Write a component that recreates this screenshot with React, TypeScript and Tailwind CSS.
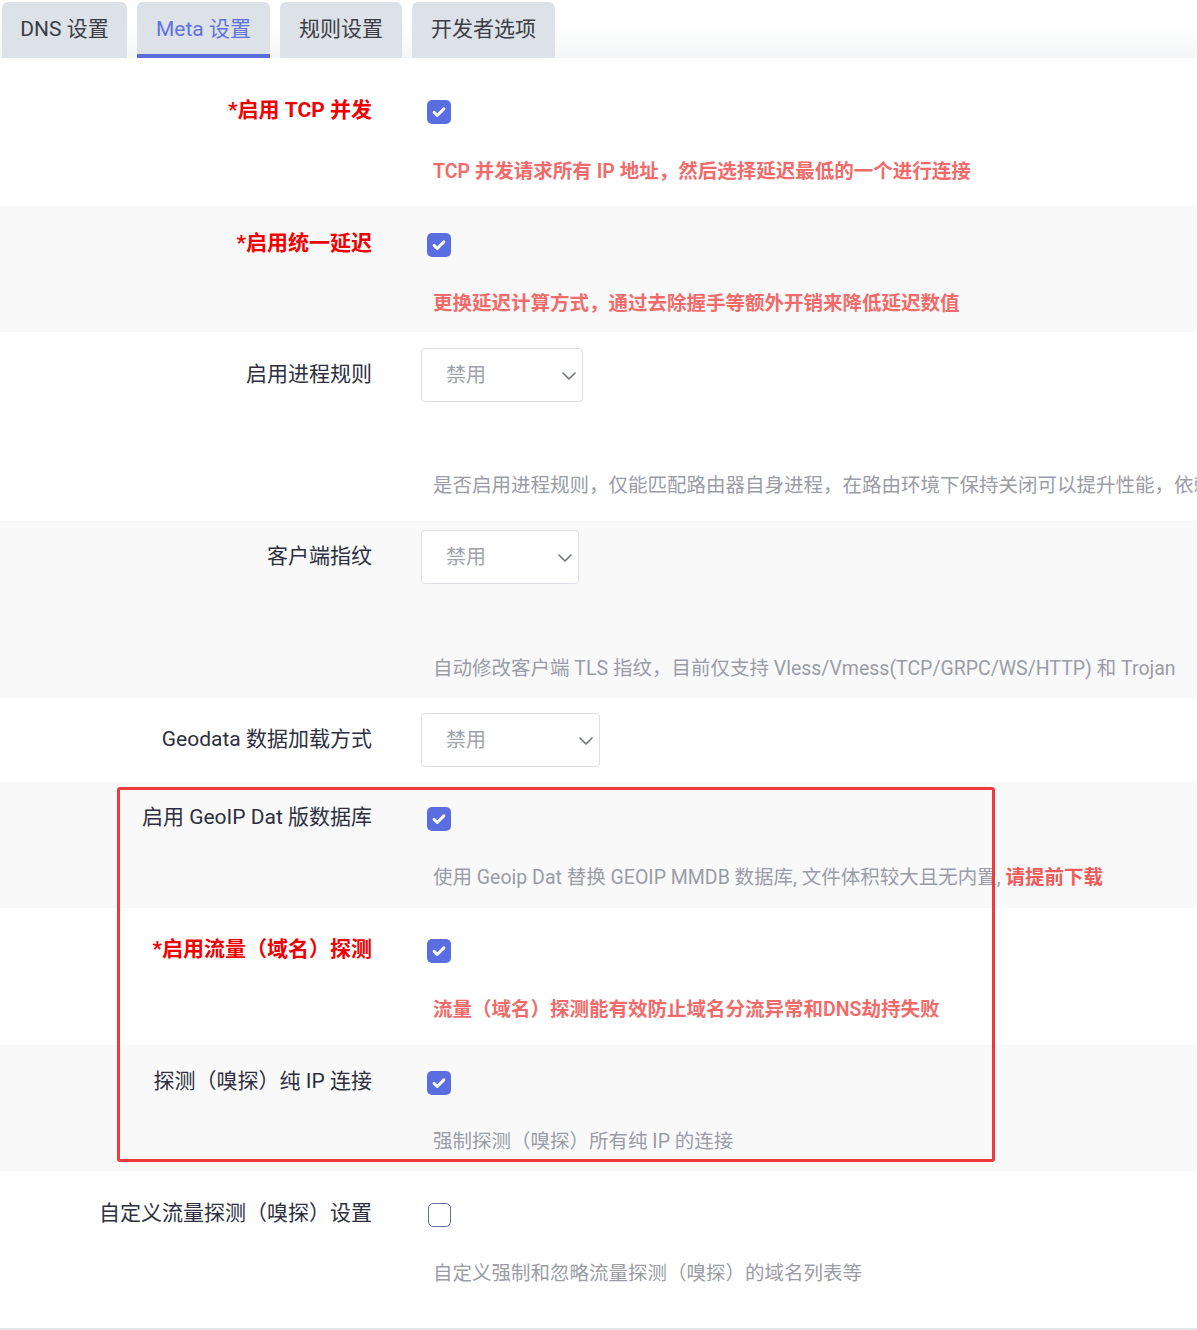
import React from "react";

const FONT = { fontFamily: '"Roboto", "Noto Sans CJK SC", sans-serif' };

const tabs = [
  { name: "DNS 设置", w: "w-[125px]" },
  { name: "Meta 设置", w: "w-[133px]" },
  { name: "规则设置", w: "w-[122px]" },
  { name: "开发者选项", w: "w-[143px]" },
];

const CheckBox = ({ checked = true }: { checked?: boolean }) =>
  checked ? (
    <span className="ml-[6px] flex h-6 w-6 items-center justify-center rounded-[5px] bg-[#5b6ee1]">
      <svg width="18" height="18" viewBox="0 0 24 24" fill="none">
        <path
          d="M5.5 12.5l4.2 4.2L18.5 7.8"
          stroke="white"
          strokeWidth="4"
          strokeLinecap="round"
          strokeLinejoin="round"
        />
      </svg>
    </span>
  ) : (
    <span className="ml-[7px] block h-6 w-[23px] rounded-[5px] border-[1.5px] border-[#66709e] bg-white" />
  );

const Select = ({ width }: { width: string }) => (
  <div
    className={`flex h-[54px] items-center justify-between rounded-[4px] border border-[#dcdfe6] bg-white pl-[24px] pr-[6px] ${width}`}
  >
    <span className="text-[20px] text-[#a0a3ab]">禁用</span>
    <svg width="14" height="8" viewBox="0 0 14 8" fill="none" className="mt-[2px]">
      <path d="M1 1l6 6 6-6" stroke="#70747c" strokeWidth="1.6" strokeLinecap="round" strokeLinejoin="round" />
    </svg>
  </div>
);

type RowProps = {
  label: string;
  required?: boolean;
  gray?: boolean;
  desc?: React.ReactNode;
  red?: boolean;
  pad: string;
  gap?: string;
  checked?: boolean;
};

const Desc = ({ children, red, gap }: { children: React.ReactNode; red?: boolean; gap?: string }) => (
  <div
    className={`whitespace-nowrap pl-[12px] text-[19.5px] leading-[28px] ${gap} ${
      red ? "font-semibold text-[#f26b6b]" : "text-[#9a9ca6]"
    }`}
  >
    {children}
  </div>
);

const CheckRow = ({ label, required, gray, desc, red, pad, gap, checked = true }: RowProps) => (
  <div className={`flex ${gray ? "bg-[#f9f9f9]" : "bg-white"} ${pad}`}>
    <div className="flex w-[372px] shrink-0 justify-end">
      <div
        className={`-mt-[2px] h-6 whitespace-nowrap text-[21px] leading-[24px] ${
          required ? "font-bold text-[#f00000]" : "text-[#2d2f40]"
        }`}
      >
        {required ? "*" : ""}
        {label}
      </div>
    </div>
    <div className="min-w-0 flex-1 pl-[49px]">
      <div className="flex h-6 items-center">
        <CheckBox checked={checked} />
      </div>
      {desc && (
        <Desc red={red} gap={gap}>
          {desc}
        </Desc>
      )}
    </div>
  </div>
);

const SelectRow = ({ label, gray, desc, pad, gap, width }: RowProps & { width: string }) => (
  <div className={`flex ${gray ? "bg-[#f9f9f9]" : "bg-white"} ${pad}`}>
    <div className="flex h-[54px] w-[372px] shrink-0 items-center justify-end">
      <span className="whitespace-nowrap text-[21px] text-[#2d2f40]">{label}</span>
    </div>
    <div className="min-w-0 flex-1 pl-[49px]">
      <Select width={width} />
      {desc && <Desc gap={gap}>{desc}</Desc>}
    </div>
  </div>
);

export default function App() {
  return (
    <div style={FONT} className="relative w-[1197px] overflow-hidden bg-white">
      <div className="flex h-[58px] gap-[10px] bg-linear-to-b from-white from-40% to-[#f5f6f7] pl-[2px] pt-[2px]">
        {tabs.map((t, i) => (
          <div
            key={t.name}
            className={`flex h-[56px] items-center justify-center rounded-t-[6px] bg-[#dde1e8] text-[21px] ${t.w} ${
              i === 1
                ? "text-[#6173dc] shadow-[inset_0_-4px_0_#5a6edb]"
                : "text-[#3b3e45]"
            }`}
          >
            {t.name}
          </div>
        ))}
      </div>

      <CheckRow
        label="启用 TCP 并发"
        required
        red
        pad="pt-[42px] pb-[20px]"
        gap="mt-[34px]"
        desc="TCP 并发请求所有 IP 地址，然后选择延迟最低的一个进行连接"
      />
      <CheckRow
        label="启用统一延迟"
        required
        red
        gray
        pad="pt-[27px] pb-[14px]"
        gap="mt-[33px]"
        desc="更换延迟计算方式，通过去除握手等额外开销来降低延迟数值"
      />
      <SelectRow
        label="启用进程规则"
        width="w-[162px]"
        pad="pt-[16px] pb-[21px]"
        gap="mt-[70px]"
        desc="是否启用进程规则，仅能匹配路由器自身进程，在路由环境下保持关闭可以提升性能，依赖于内核支持"
      />
      <SelectRow
        label="客户端指纹"
        gray
        width="w-[158px]"
        pad="pt-[9px] pb-[15px]"
        gap="mt-[71px]"
        desc="自动修改客户端 TLS 指纹，目前仅支持 Vless/Vmess(TCP/GRPC/WS/HTTP) 和 Trojan"
      />
      <SelectRow label="Geodata 数据加载方式" width="w-[179px]" pad="pt-[15px] pb-[15px]" />
      <CheckRow
        label="启用 GeoIP Dat 版数据库"
        gray
        pad="pt-[25px] pb-[16px]"
        gap="mt-[33px]"
        desc={
          <>
            使用 Geoip Dat 替换 GEOIP MMDB 数据库, 文件体积较大且无内置,{" "}
            <span className="font-bold text-[#f05a5a]">请提前下载</span>
          </>
        }
      />
      <CheckRow
        label="启用流量（域名）探测"
        required
        red
        pad="pt-[31px] pb-[21px]"
        gap="mt-[33px]"
        desc="流量（域名）探测能有效防止域名分流异常和DNS劫持失败"
      />
      <CheckRow
        label="探测（嗅探）纯 IP 连接"
        gray
        pad="pt-[26px] pb-[15px]"
        gap="mt-[33px]"
        desc="强制探测（嗅探）所有纯 IP 的连接"
      />
      <CheckRow
        label="自定义流量探测（嗅探）设置"
        checked={false}
        pad="pt-[32px] pb-[40px]"
        gap="mt-[33px]"
        desc="自定义强制和忽略流量探测（嗅探）的域名列表等"
      />
      <div className="h-[2px] bg-[#e4e7e7]" />

      <div className="pointer-events-none absolute left-[117px] top-[787px] h-[375px] w-[878px] rounded-[3px] border-[3px] border-[#ec3a3f]" />
    </div>
  );
}
